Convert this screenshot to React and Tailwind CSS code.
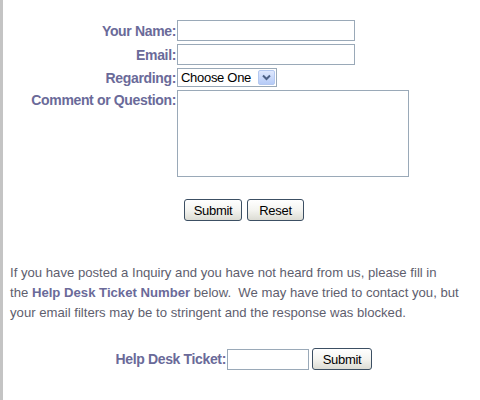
import React from "react"

function XpButton({ children, className = "" }) {
  return (
    <button
      type="button"
      className={
        "h-[22px] rounded-[3px] border border-[#3c4f63] bg-gradient-to-b from-white via-[#f4f4f0] to-[#dcdcd4] text-[13px] tracking-[-0.3px] text-black leading-none " +
        className
      }
    >
      {children}
    </button>
  )
}

function Row({ label, children, top = false }) {
  return (
    <div className={"flex " + (top ? "items-start" : "items-center")}>
      <label
        className={
          "w-[174px] pr-[1px] text-right font-bold text-[14px] leading-[18px] tracking-[-0.35px] text-[#6a6a99] " +
          (top ? "pt-[1px]" : "")
        }
      >
        {label}
      </label>
      {children}
    </div>
  )
}

export default function App() {
  return (
    <div
      className="min-h-[400px] w-[480px] border-l-[3px] border-[#c4c4c4] bg-white"
      style={{ fontFamily: '"Liberation Sans", Arial, sans-serif' }}
    >
      <div className="flex flex-col gap-[3px] pt-[20px]">
        <Row label="Your Name:">
          <input className="h-[21px] w-[178px] border border-[#9aa9b8] bg-white outline-none" />
        </Row>
        <Row label="Email:">
          <input className="h-[21px] w-[178px] border border-[#9aa9b8] bg-white outline-none" />
        </Row>
        <Row label="Regarding:">
          <div className="flex h-[19px] w-[100px] items-center justify-between border border-[#9aa9b8] bg-white pl-[3px] pr-[1px] text-[13px] tracking-[-0.3px] text-black">
            <span>Choose One</span>
            <span className="flex h-[15px] w-[17px] items-center justify-center rounded-[2px] border border-[#b4c8f0] bg-gradient-to-b from-[#dfe8fd] to-[#b6cbf7]">
              <svg width="9" height="7" viewBox="0 0 9 7">
                <path d="M1 1.5 L4.5 5 L8 1.5" fill="none" stroke="#4d6185" strokeWidth="2" />
              </svg>
            </span>
          </div>
        </Row>
        <Row label="Comment or Question:" top>
          <textarea className="h-[87px] w-[232px] resize-none border border-[#9aa9b8] bg-white outline-none" />
        </Row>
      </div>

      <div className="mt-[22px] flex gap-[5px] pl-[181px]">
        <XpButton className="w-[58px]">Submit</XpButton>
        <XpButton className="w-[57px]">Reset</XpButton>
      </div>

      <p className="mt-[42px] pl-[7px] text-[13.15px] leading-[20px] text-[#5e5e6e]">
        If you have posted a Inquiry and you have not heard from us, please fill in
        <br />
        the <b className="text-[#6a6a99]">Help Desk Ticket Number</b> below.&nbsp; We may have tried to contact you, but
        <br />
        your email filters may be to stringent and the response was blocked.
      </p>

      <div className="mt-[25px] flex items-center">
        <label className="w-[224px] pr-[1px] text-right font-bold text-[14px] leading-[18px] tracking-[-0.35px] text-[#6a6a99]">
          Help Desk Ticket:
        </label>
        <input className="h-[21px] w-[82px] border border-[#9aa9b8] bg-white outline-none" />
        <XpButton className="ml-[3px] w-[60px]">Submit</XpButton>
      </div>
    </div>
  )
}
